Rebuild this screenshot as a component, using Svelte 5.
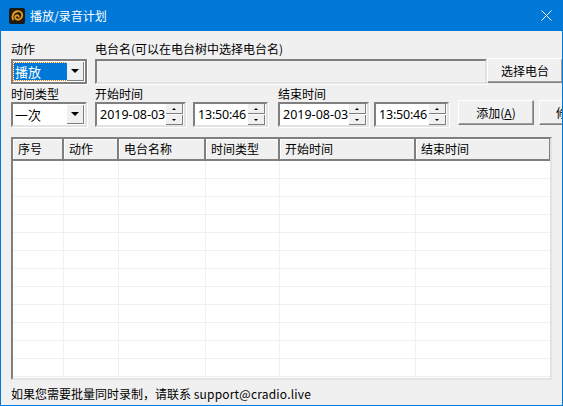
<script lang="ts">
	const columns = [
		{ label: '序号', width: 51 },
		{ label: '动作', width: 55 },
		{ label: '电台名称', width: 87 },
		{ label: '时间类型', width: 74 },
		{ label: '开始时间', width: 136 },
		{ label: '结束时间', width: 135 },
	];
	const rows = Array.from({ length: 12 });
</script>

<div class="window">
	<header class="titlebar">
		<svg class="logo" viewBox="0 0 16 16" width="16" height="16">
			<rect width="16" height="16" rx="2" fill="#1d1a14" />
			<path d="M4 11.5C2.5 8 4.5 3.6 8.6 3.2c3-.3 5 2 4.6 4.7-.4 2.7-3.2 4.600-5.600 3.500-1.800-.8-1.900-3.300-.2-4 1.200-.5 2.500.3 2.400 1.500" fill="none" stroke="#e89a1c" stroke-width="1.900" stroke-linecap="round" />
		</svg>
		<span class="title">播放/录音计划</span>
		<svg class="close" viewBox="0 0 11 11" width="11" height="11">
			<path d="M.5.500l10 10M10.500.500l-10 10" stroke="#fff" stroke-width="1" fill="none" />
		</svg>
	</header>

	<main class="body">
		<div class="row first">
			<div class="field action">
				<span class="label">动作</span>
				<div class="sunken combo">
					<span class="value selected">播放</span>
					<span class="arrow-btn"><i class="caret"></i></span>
				</div>
			</div>
			<div class="field station">
				<span class="label">电台名(可以在电台树中选择电台名)</span>
				<div class="sunken disabled"></div>
			</div>
			<button class="btn pick">选择电台</button>
		</div>

		<div class="row second">
			<div class="field action">
				<span class="label">时间类型</span>
				<div class="sunken combo plain">
					<span class="value">一次</span>
					<span class="arrow-btn"><i class="caret"></i></span>
				</div>
			</div>
			<div class="field date">
				<span class="label">开始时间</span>
				<div class="sunken spin-box">
					<span class="value">2019-08-03</span>
					<span class="spin"><b><i class="up"></i></b><b><i class="down"></i></b></span>
				</div>
			</div>
			<div class="field time">
				<span class="label">&nbsp;</span>
				<div class="sunken spin-box">
					<span class="value clock">13:50:46</span>
					<span class="spin"><b><i class="up"></i></b><b><i class="down"></i></b></span>
				</div>
			</div>
			<div class="field date end">
				<span class="label">结束时间</span>
				<div class="sunken spin-box">
					<span class="value">2019-08-03</span>
					<span class="spin"><b><i class="up"></i></b><b><i class="down"></i></b></span>
				</div>
			</div>
			<div class="field time end-time">
				<span class="label">&nbsp;</span>
				<div class="sunken spin-box">
					<span class="value clock">13:50:46</span>
					<span class="spin"><b><i class="up"></i></b><b><i class="down"></i></b></span>
				</div>
			</div>
			<button class="btn add">添加(<u>A</u>)</button>
			<button class="btn edit">修改(<u>M</u>)</button>
		</div>

		<div class="table">
			<div class="thead">
				{#each columns as col}
					<div class="th" style="width: {col.width}px">{col.label}</div>
				{/each}
			</div>
			{#each rows as _}
				<div class="tr">
					{#each columns as col}
						<div class="td" style="width: {col.width}px"></div>
					{/each}
				</div>
			{/each}
		</div>

		<p class="status">如果您需要批量同时录制，请联系 <span class="mail">support@cradio.live</span></p>
	</main>
</div>

<style>
	:global(body) {
		margin: 0;
		background: #f0f0f0;
	}

	.window {
		box-sizing: border-box;
		width: 563px;
		height: 406px;
		overflow: hidden;
		border: 1px solid #0078d7;
		border-width: 0 1px 1px 1px;
		background: #f0f0f0;
		color: #000;
		font-family: 'Noto Sans CJK SC', 'Noto Sans', sans-serif;
		font-size: 12px;
	}

	.titlebar {
		display: flex;
		align-items: center;
		height: 31px;
		padding: 0 10px 0 8px;
		background: #0078d7;
		color: #fff;
	}

	.logo {
		margin-right: 5px;
	}

	.title {
		flex: 1;
		line-height: 16px;
	}

	.body {
		padding: 9px 0 0 10px;
	}

	.row {
		display: flex;
		align-items: flex-start;
		width: 600px;
	}

	.first {
		height: 43px;
	}

	.second {
		height: 54px;
	}

	.field {
		flex: none;
		display: flex;
		flex-direction: column;
	}

	.label {
		height: 19px;
		line-height: 17px;
		white-space: nowrap;
	}

	.second .label {
		line-height: 22px;
	}

	.action {
		width: 76px;
		margin-right: 8px;
	}

	.station {
		width: 392px;
	}

	.date {
		width: 91px;
		margin-right: 7px;
	}

	.time {
		width: 75px;
		margin-right: 10px;
	}

	.end {
		margin-right: 5px;
	}

	.end-time {
		margin-right: 9px;
	}

	.sunken {
		box-sizing: border-box;
		height: 25px;
		display: flex;
		align-items: center;
		background: #fff;
		border: 2px solid;
		border-color: #7f7f7f #e3e3e3 #e3e3e3 #7f7f7f;
		box-shadow: 1px 1px 0 #fff;
	}

	.disabled {
		background: #f0f0f0;
	}

	.combo {
		padding: 1px;
		border-color: #7f7f7f;
	}

	.combo.plain {
		border-color: #7f7f7f #e3e3e3 #e3e3e3 #7f7f7f;
	}

	.value {
		flex: 1;
		padding-left: 3px;
		font-family: 'Noto Sans', 'Noto Sans CJK SC', sans-serif;
		font-size: 12.5px;
		white-space: nowrap;
	}

	.clock {
		letter-spacing: -0.2px;
	}

	.combo .value {
		padding-left: 1px;
		font-family: 'Noto Sans CJK SC', sans-serif;
		font-size: 13px;
	}

	.combo .selected {
		height: 17px;
		line-height: 17px;
		background: #0078d7;
		color: #fff;
		outline: 1px dotted #e8780a;
	}

	.arrow-btn {
		box-sizing: border-box;
		flex: none;
		width: 17px;
		height: 100%;
		display: flex;
		align-items: center;
		justify-content: center;
		background: #f0f0f0;
		border-right: 1px solid #7f7f7f;
		border-bottom: 1px solid #7f7f7f;
	}

	.caret {
		width: 0;
		height: 0;
		border: 4px solid transparent;
		border-top-color: #000;
		border-bottom-width: 0;
	}

	.spin-box {
		padding-right: 1px;
	}

	.spin {
		display: flex;
		flex-direction: column;
		gap: 1px;
		width: 17px;
		flex: none;
	}

	.spin b {
		box-sizing: border-box;
		height: 10px;
		display: flex;
		align-items: center;
		justify-content: center;
		background: #f0f0f0;
		border-right: 1px solid #7f7f7f;
		border-bottom: 1px solid #7f7f7f;
	}

	.up,
	.down {
		width: 0;
		height: 0;
		border: 2px solid transparent;
	}

	.up {
		border-bottom-color: #000;
		border-top-width: 0;
	}

	.down {
		border-top-color: #000;
		border-bottom-width: 0;
	}

	.btn {
		box-sizing: border-box;
		flex: none;
		width: 76px;
		height: 25px;
		padding: 0;
		background: #f0f0f0;
		border: 1px solid;
		border-color: #fff #7f7f7f #7f7f7f #fff;
		box-shadow: inset -1px -1px 0 #a0a0a0;
		font: inherit;
		color: #000;
	}

	.pick {
		margin-top: 18px;
	}

	.add {
		margin-top: 17px;
	}

	.edit {
		margin-top: 17px;
		margin-left: 5px;
	}

	.table {
		box-sizing: border-box;
		width: 541px;
		height: 243px;
		overflow: hidden;
		background: #fff;
		border: 2px solid;
		border-color: #7f7f7f #e3e3e3 #e3e3e3 #7f7f7f;
	}

	.thead {
		display: flex;
		height: 22px;
	}

	.th {
		box-sizing: border-box;
		flex: none;
		height: 22px;
		padding-left: 5px;
		line-height: 20px;
		background: #f0f0f0;
		border-right: 2px solid #7f7f7f;
		border-bottom: 2px solid #7f7f7f;
		box-shadow: inset 1px 1px 0 #fff;
	}

	.tr {
		display: flex;
		height: 18px;
	}

	.td {
		box-sizing: border-box;
		flex: none;
		height: 18px;
		border-right: 1px solid #f0f0f0;
		border-bottom: 1px solid #f0f0f0;
	}

	.status {
		margin: 0;
		height: 26px;
		line-height: 28px;
		white-space: nowrap;
	}

	.mail {
		letter-spacing: 0.2px;
	}
</style>
